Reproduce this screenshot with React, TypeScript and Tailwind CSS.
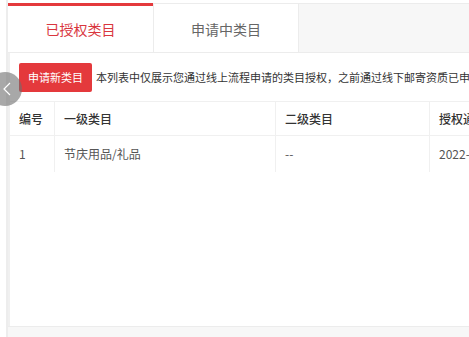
import React from 'react';

const font = { fontFamily: '"Microsoft YaHei", "Noto Sans CJK SC", "Liberation Sans", sans-serif' };

const columns = [
  { title: '编号', width: 'w-[44px]' },
  { title: '一级类目', width: 'w-[221px]' },
  { title: '二级类目', width: 'w-[154px]' },
  { title: '授权通过时间', width: 'w-[200px]' },
];

const rows = [['1', '节庆用品/礼品', '--', '2022-08-16 10:21:33']];

const App: React.FC = () => {
  return (
    <div className="relative w-[469px] h-[337px] overflow-hidden bg-white" style={font}>
      <div className="pt-[3px] ml-[6px] border-l-2 border-[#ededed] h-full flex flex-col">
        {/* tabs */}
        <div className="flex h-[50px] border-b border-[#ececec] shrink-0">
          <div className="w-[145px] shrink-0 border-t-[3px] border-[#e4393c] bg-white flex items-center justify-center text-[14px] text-[#d9363e] pt-[1px]">
            已授权类目
          </div>
          <div className="w-[145px] shrink-0 border-t border-l border-[#ececec] bg-white flex items-center justify-center text-[14px] text-[#666] pt-[2px]">
            申请中类目
          </div>
          <div className="flex-1 border-t border-l border-[#ececec] bg-[#f7f7f7]" />
        </div>

        {/* content */}
        <div className="flex-1 border-l-2 border-[#f0f0f0] bg-white">
          <div className="flex items-center pt-[10px] pl-[9px] whitespace-nowrap">
            <button className="h-[29px] w-[73px] rounded-[2px] bg-[#e4393c] text-white text-[11px] shrink-0">
              申请新类目
            </button>
            <span className="ml-[4px] text-[11px] text-[#333]">
              本列表中仅展示您通过线上流程申请的类目授权，之前通过线下邮寄资质已申请的类目授权请联系客服查询
            </span>
          </div>

          <div className="mt-[9px] whitespace-nowrap">
            <div className="flex h-[35px] border-t border-b border-[#f0f0f0] text-[12px] text-[#333] font-medium">
              {columns.map((c, i) => (
                <div
                  key={c.title}
                  className={`${c.width} shrink-0 flex items-center pl-[9px] ${i > 0 ? 'border-l border-[#f0f0f0]' : ''}`}
                >
                  {c.title}
                </div>
              ))}
            </div>
            {rows.map((r) => (
              <div key={r[0]} className="flex h-[36px] text-[12px] text-[#555]">
                {r.map((cell, i) => (
                  <div
                    key={i}
                    className={`${columns[i].width} shrink-0 flex items-center pl-[9px] ${i > 0 ? 'border-l border-[#f0f0f0]' : ''}`}
                  >
                    {cell}
                  </div>
                ))}
              </div>
            ))}
          </div>
        </div>

        {/* footer */}
        <div className="h-[11px] shrink-0 border-t border-[#ececec] bg-[#f7f7f7]" />
      </div>

      {/* back button */}
      <div className="absolute left-[-12px] top-[72px] w-[34px] h-[34px] rounded-full bg-[rgba(110,110,110,0.6)] flex items-center justify-end pr-[11px]">
        <svg width="8" height="14" viewBox="0 0 8 14" fill="none">
          <path d="M7 1L1 7l6 6" stroke="white" strokeWidth="1.2" />
        </svg>
      </div>
    </div>
  );
};

export default App;
